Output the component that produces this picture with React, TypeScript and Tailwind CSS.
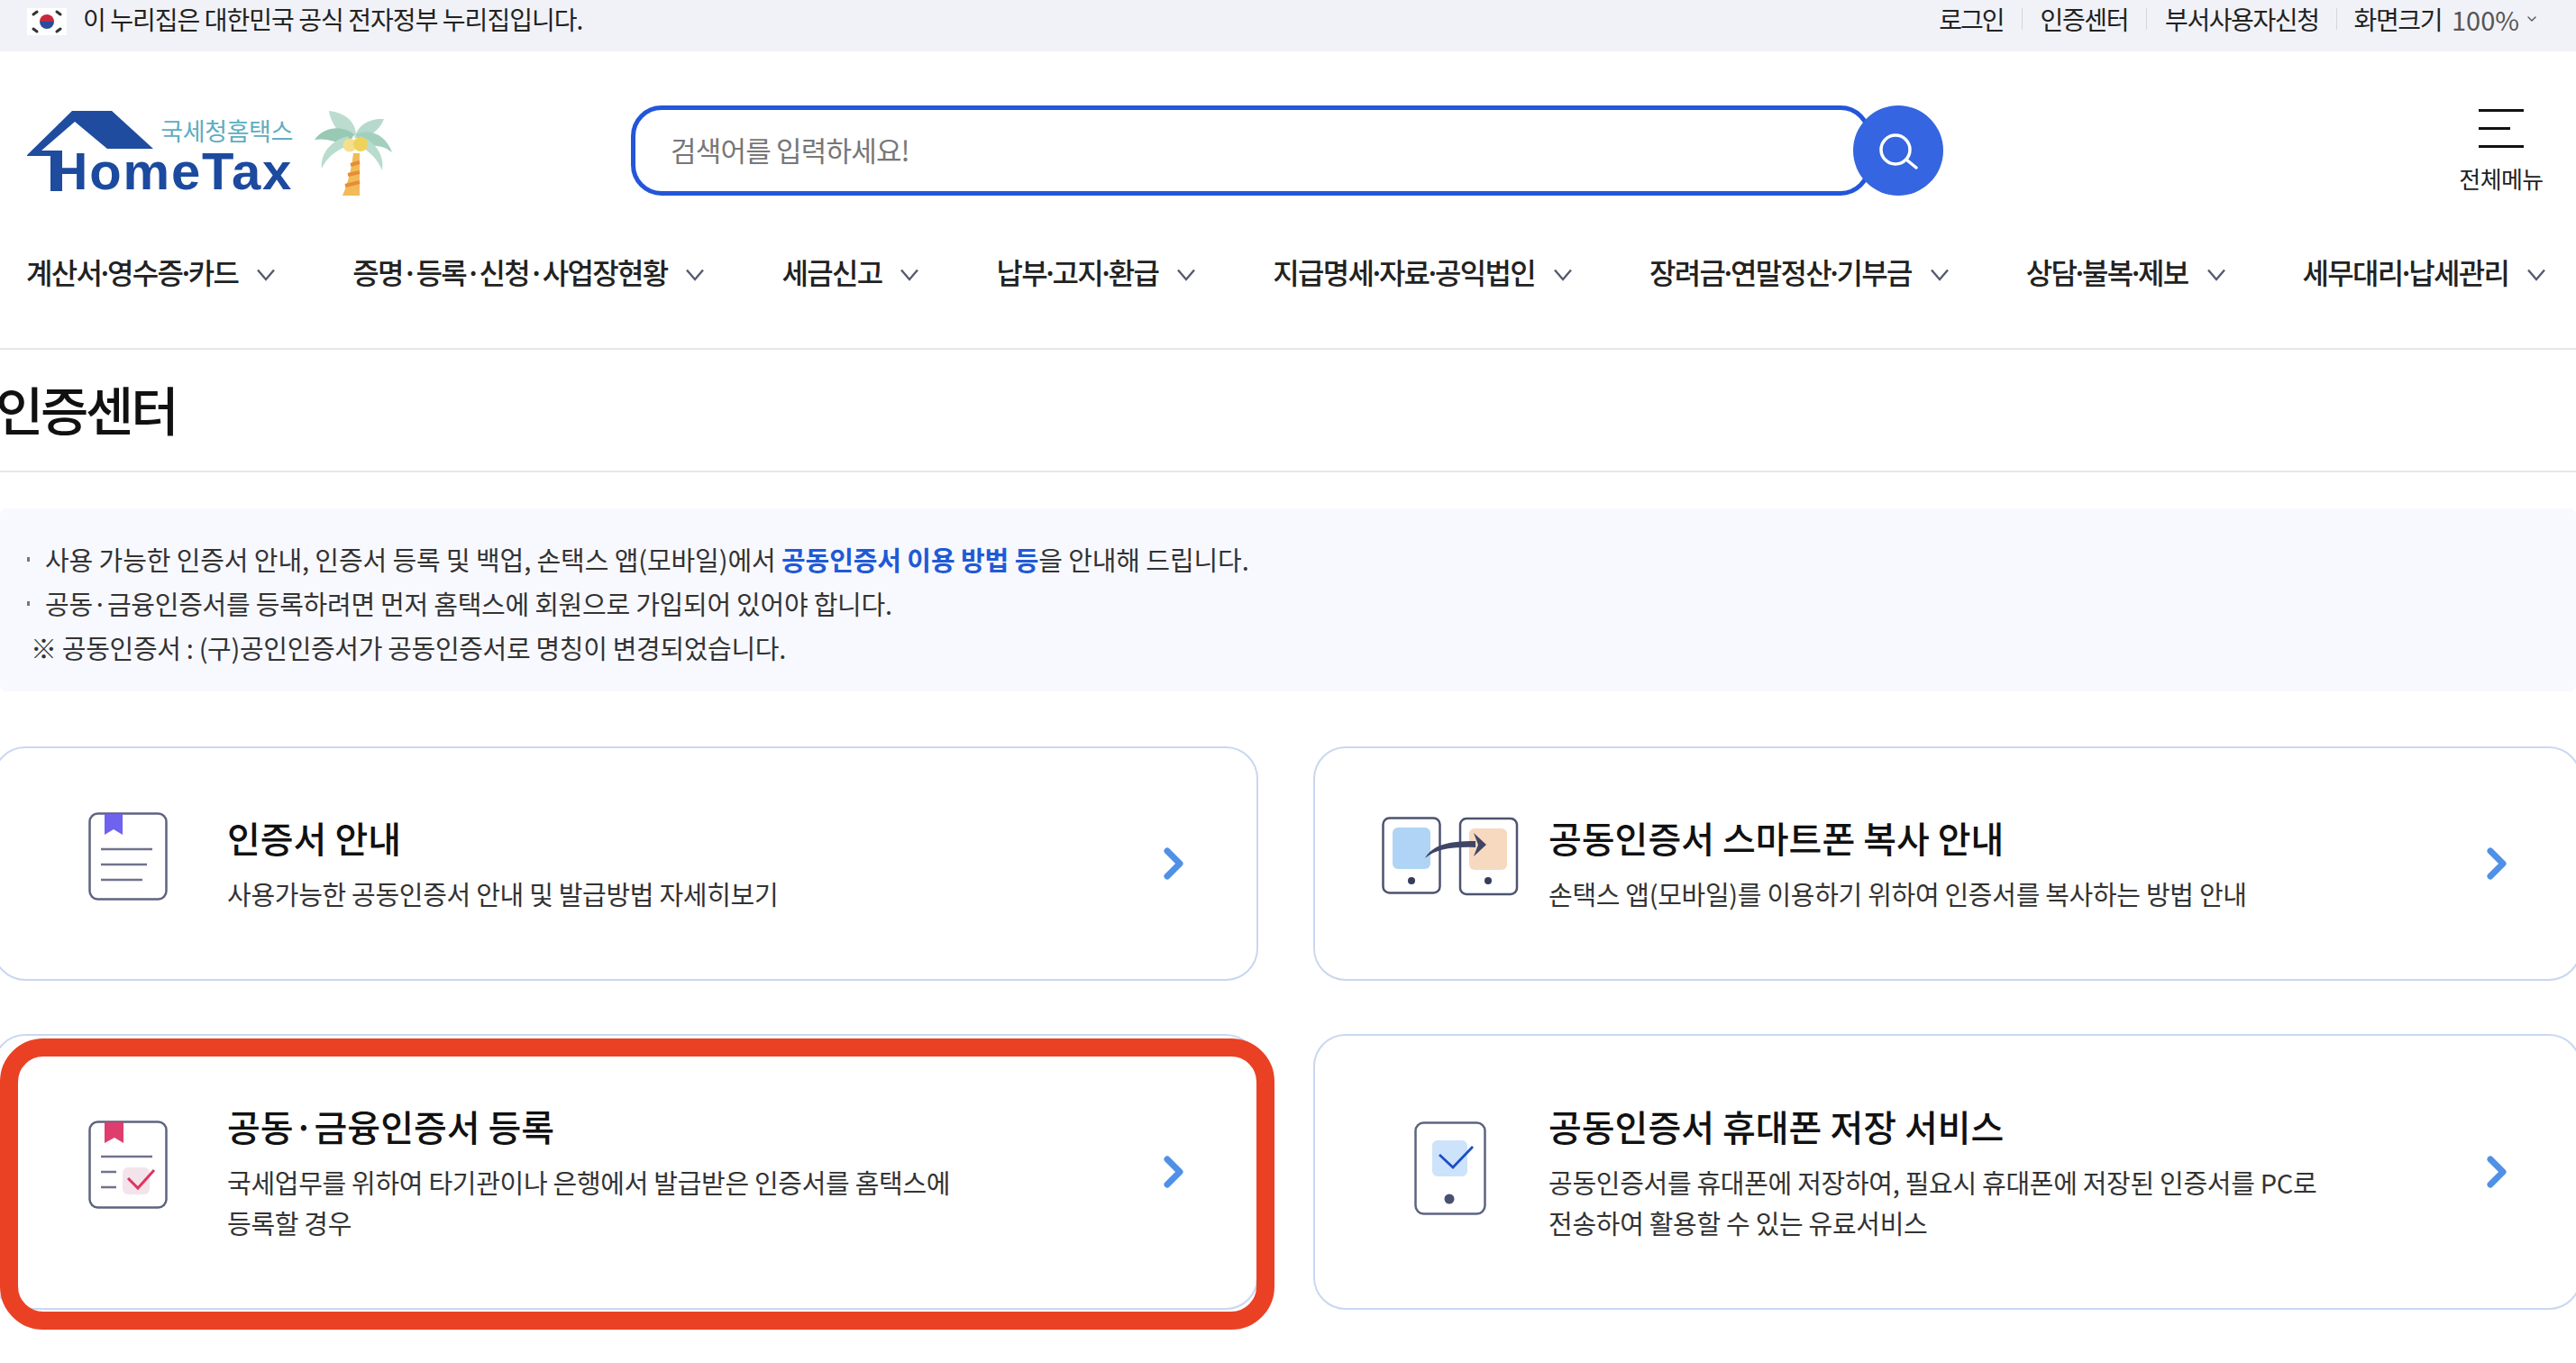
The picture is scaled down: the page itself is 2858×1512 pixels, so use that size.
import { Fragment } from "react";
import type { ReactNode } from "react";
import { ChevronDown } from "lucide-react";

const font = "font-['Noto_Sans_CJK_KR','Noto_Sans',sans-serif]";

const navItems = [
  "계산서·영수증·카드",
  "증명·등록·신청·사업장현황",
  "세금신고",
  "납부·고지·환급",
  "지급명세·자료·공익법인",
  "장려금·연말정산·기부금",
  "상담·불복·제보",
  "세무대리·납세관리",
];

const FlagIcon = () => (
  <svg width="44" height="30" viewBox="0 0 44 30" className="-mt-[9px] shrink-0">
    <rect width="44" height="30" fill="#fff" />
    <path d="M14 15a8 8 0 0 1 16 0z" fill="#c8283c" />
    <path d="M14 15a8 8 0 0 0 16 0z" fill="#2a4c9c" />
    <g stroke="#333" strokeWidth="3" strokeLinecap="round">
      <path d="M7 7l4 -3" />
      <path d="M33 4l4 3" />
      <path d="M7 23l4 3" />
      <path d="M33 26l4 -3" />
    </g>
  </svg>
);

const Logo = () => (
  <div className="relative mt-[6px] flex h-[94px] w-[405px] shrink-0">
    <svg width="150" height="94" viewBox="0 0 150 94" className="absolute left-0 top-0">
      <path d="M0 49L50 0H94L140 42H89L53 12L16 44H39V89H26V50H0z" fill="#1f4c9e" />
    </svg>
    <div className="flex w-[295px] flex-col items-end">
      <span className="mt-[6px] text-[27px] leading-[32px] tracking-[-0.4px] text-[#5eadc0]">국세청홈택스</span>
      <span className="mt-[2px] font-['Liberation_Sans'] text-[58px] leading-[54px] font-bold tracking-[1.8px] text-[#1c4a9e]">
        HomeTax
      </span>
    </div>
    <svg width="86" height="94" viewBox="0 0 86 94" className="absolute left-[319px] top-0">
      <path d="M16 0C34 2 46 12 46 28L28 24C22 18 17 8 16 0z" fill="#bcdccf" />
      <path d="M77 9C72 22 60 31 44 30C48 16 60 8 77 9z" fill="#b5d9cc" />
      <path d="M0 32C10 18 30 15 44 26L36 40C24 33 10 30 0 32z" fill="#98c9b4" />
      <path d="M86 46C80 28 62 18 46 26L54 40C66 37 78 39 86 46z" fill="#a3d0bd" />
      <path d="M8 64C6 48 18 32 38 28L34 40C24 44 13 52 8 64z" fill="#b9dccf" />
      <path d="M75 66C78 50 68 34 50 28L52 40C62 46 70 54 75 66z" fill="#b9dccf" />
      <path d="M43 47H50V94H31C37 80 41 64 43 47z" fill="#f2bb57" />
      <path d="M40 60L50 57M37 71L50 68M34 83L50 79" stroke="#e58d3a" strokeWidth="4" />
      <circle cx="39" cy="38" r="7.5" fill="#f4e08c" />
      <circle cx="51" cy="37" r="8" fill="#efd25a" />
    </svg>
  </div>
);

const DocIcon = () => (
  <svg width="88" height="98" viewBox="0 0 88 98" fill="none">
    <rect x="1.5" y="1.5" width="85" height="95" rx="9" stroke="#5d6480" strokeWidth="2.5" />
    <path d="M18 2h20v23l-10-6-10 6z" fill="#6f62ee" />
    <path d="M14 41h57M14 58h51M14 75h46" stroke="#6f738c" strokeWidth="2.5" />
  </svg>
);

const CheckDocIcon = () => (
  <svg width="88" height="98" viewBox="0 0 88 98" fill="none">
    <rect x="1.5" y="1.5" width="85" height="95" rx="9" stroke="#5d6480" strokeWidth="2.5" />
    <path d="M18 2h21v23l-10-6-11 6z" fill="#de3d6e" />
    <path d="M14 40h57M14 57h17M14 74h17" stroke="#6f738c" strokeWidth="2.5" />
    <rect x="38" y="52" width="30" height="30" rx="6" fill="#f3e4ec" />
    <path d="M44 64l11 11 18-20" stroke="#e0355f" strokeWidth="3" />
  </svg>
);

const CopyIcon = () => (
  <svg width="152" height="88" viewBox="0 0 152 88" fill="none">
    <rect x="1.5" y="1.5" width="63" height="83" rx="7" stroke="#4d5370" strokeWidth="2.5" />
    <rect x="87" y="2" width="63" height="84" rx="7" stroke="#4d5370" strokeWidth="2.5" />
    <rect x="12" y="12" width="42" height="46" rx="6" fill="#b0d4f5" />
    <rect x="97" y="13" width="42" height="46" rx="6" fill="#f6d9bf" />
    <circle cx="33" cy="71" r="4" fill="#363c5c" />
    <circle cx="118" cy="71" r="4" fill="#363c5c" />
    <path d="M48 46C56 32 72 27 104 27V34C78 33 60 36 48 46z" fill="#3f4565" />
    <path d="M102 18L116 31L102 44L107 31z" fill="#3f4565" />
  </svg>
);

const PhoneCheckIcon = () => (
  <svg width="80" height="104" viewBox="0 0 80 104" fill="none">
    <rect x="1.5" y="1.5" width="77" height="101" rx="9" stroke="#5d6480" strokeWidth="2.5" />
    <rect x="20" y="21" width="39" height="40" rx="6" fill="#cde3fb" />
    <path d="M28 37l15 14 22-23" stroke="#1e4fc0" strokeWidth="2.8" />
    <circle cx="39" cy="86" r="5.5" fill="#4a5070" />
  </svg>
);

const ArrowIcon = ({ className }: { className: string }) => (
  <svg width="22" height="36" viewBox="0 0 22 36" fill="none" className={className}>
    <path d="M4 4L18 18L4 32" stroke="#5090e6" strokeWidth="7" strokeLinejoin="round" strokeLinecap="round" />
  </svg>
);

const NavChevron = () => (
  <svg width="20" height="14" viewBox="0 0 20 14" fill="none" className="mt-[9px] shrink-0">
    <path d="M1 1.5L10 12L19 1.5" stroke="#555a70" strokeWidth="2.4" />
  </svg>
);

const NavLabel = ({ label, wide }: { label: string; wide: boolean }) => (
  <span>
    {label.split("·").map((part, i) => (
      <Fragment key={part}>
        {i > 0 && <span className={wide ? "-mx-[1px]" : "-mx-[5px]"}>·</span>}
        {part}
      </Fragment>
    ))}
  </span>
);

type CardProps = {
  icon: ReactNode;
  slot: string;
  iconShift: string;
  title: string;
  desc: ReactNode;
};

const Card = ({ icon, slot, iconShift, title, desc }: CardProps) => (
  <div className="flex items-center rounded-[36px] border-2 border-[#c9d7f0] bg-white">
    <div className={`${slot} ${iconShift} shrink-0`}>{icon}</div>
    <div>
      <div className="text-[40px] leading-[55px] font-medium text-[#111]">{title}</div>
      <div className="mt-[12px] text-[29px] leading-[45px] tracking-[-0.3px] text-[#333]">{desc}</div>
    </div>
    <ArrowIcon className="ml-auto mr-[81px] shrink-0" />
  </div>
);

export default function App() {
  return (
    <div className={`${font} h-[1512px] w-full overflow-hidden bg-white`}>
      {/* 정부 배너 */}
      <div className="flex h-[57px] items-center bg-[#f1f2f7] pl-[30px] pr-[41px]">
        <FlagIcon />
        <span className="ml-[18px] pb-[16px] text-[28px] leading-[36px] tracking-[-0.95px] text-[#222]">
          이 누리집은 대한민국 공식 전자정부 누리집입니다.
        </span>
        <div className="ml-auto flex items-center pb-[16px] text-[28px] leading-[36px] tracking-[-1.4px] text-[#222]">
          <span className="tracking-[-2px]">로그인</span>
          <span className="mx-[20px] h-[24px] w-[1px] bg-[#d4d6dc]" />
          <span>인증센터</span>
          <span className="mx-[20px] h-[24px] w-[1px] bg-[#d4d6dc]" />
          <span>부서사용자신청</span>
          <span className="mx-[19px] h-[24px] w-[1px] bg-[#d4d6dc]" />
          <span>화면크기</span>
          <span className="ml-[11px] text-[29px] tracking-[0px] text-[#555]">100%</span>
          <ChevronDown size={16} strokeWidth={2} className="ml-[6px] text-[#555]" />
        </div>
      </div>

      {/* 로고 · 검색 */}
      <div className="flex items-start pl-[30px] pr-[35px] pt-[60px]">
        <Logo />
        <div className="ml-[265px] flex items-center">
          <div className="flex h-[100px] w-[1376px] items-center rounded-[34px] border-[5px] border-[#2356d8] pb-[2px] pl-[39px] text-[31px] tracking-[-0.8px] text-[#777]">
            검색어를 입력하세요!
          </div>
          <div className="relative -ml-[20px] flex h-[100px] w-[100px] items-center justify-center rounded-full bg-[#3565e0]">
            <svg width="44" height="44" viewBox="0 0 44 44" fill="none" stroke="#fff" strokeWidth="3.5">
              <circle cx="19" cy="21" r="16" />
              <path d="M31 32L42 41" strokeLinecap="round" />
            </svg>
          </div>
        </div>
        <div className="ml-auto flex w-[96px] flex-col items-center pt-[4px]">
          <div className="flex w-[50px] flex-col gap-[17px]">
            <span className="h-[3px] w-[50px] bg-[#111]" />
            <span className="h-[3px] w-[35px] bg-[#111]" />
            <span className="h-[3px] w-[50px] bg-[#111]" />
          </div>
          <span className="mt-[17px] whitespace-nowrap text-[26px] leading-[34px] tracking-[-0.6px] text-[#222]">전체메뉴</span>
        </div>
      </div>

      {/* 메뉴 */}
      <div className="flex h-[171px] items-center gap-[86px] border-b-2 border-[#e6e7eb] pb-[2px] pl-[29px] whitespace-nowrap">
        {navItems.map((item, i) => (
          <div key={item} className="flex items-center gap-[21px] text-[32px] font-medium tracking-[-1.7px] text-[#222]">
            <NavLabel label={item} wide={i === 1} />
            <NavChevron />
          </div>
        ))}
      </div>

      {/* 제목 */}
      <div className="flex h-[136px] items-center border-b-2 border-[#e6e7eb] pb-[4px]">
        <h1 className="-ml-[5px] text-[58px] leading-none font-medium tracking-[-3.3px] text-[#111]">인증센터</h1>
      </div>

      {/* 안내 */}
      <div className="mt-[40px] h-[203px] rounded-[8px] bg-[#f8f9fe] pt-[32px] text-[29px] leading-[49px] tracking-[-0.25px] text-[#333]">
        <div className="flex">
          <span className="ml-[30px] mr-[17px] mt-[22px] h-[5px] w-[3px] bg-[#777]" />
          <span className="tracking-[-0.1px]">
            사용 가능한 인증서 안내, 인증서 등록 및 백업, 손택스 앱(모바일)에서{" "}
            <b className="font-bold text-[#1f5ad6]">공동인증서 이용 방법 등</b>을 안내해 드립니다.
          </span>
        </div>
        <div className="flex">
          <span className="ml-[30px] mr-[17px] mt-[22px] h-[5px] w-[3px] bg-[#777]" />
          <span>공동·금융인증서를 등록하려면 먼저 홈택스에 회원으로 가입되어 있어야 합니다.</span>
        </div>
        <div className="pl-[34px] tracking-[-0.33px]">※ 공동인증서 : (구)공인인증서가 공동인증서로 명칭이 변경되었습니다.</div>
      </div>

      {/* 카드 */}
      <div className="relative mt-[61px]">
        <div className="-ml-[8px] grid w-[2872px] grid-cols-[1404px_1407px] grid-rows-[260px_306px] gap-x-[61px] gap-y-[59px]">
          <Card
            icon={<DocIcon />}
            slot="w-[258px] pl-[104px]"
            iconShift="-mt-[16px]"
            title="인증서 안내"
            desc="사용가능한 공동인증서 안내 및 발급방법 자세히보기"
          />
          <Card
            icon={<CopyIcon />}
            slot="w-[259px] pl-[74px]"
            iconShift="-mt-[16px]"
            title="공동인증서 스마트폰 복사 안내"
            desc="손택스 앱(모바일)를 이용하기 위하여 인증서를 복사하는 방법 안내"
          />
          <Card
            icon={<CheckDocIcon />}
            slot="w-[258px] pl-[104px]"
            iconShift="-mt-[16px]"
            title="공동·금융인증서 등록"
            desc={
              <>
                국세업무를 위하여 타기관이나 은행에서 발급받은 인증서를 홈택스에
                <br />
                등록할 경우
              </>
            }
          />
          <Card
            icon={<PhoneCheckIcon />}
            slot="w-[259px] pl-[110px]"
            iconShift="-mt-[8px]"
            title="공동인증서 휴대폰 저장 서비스"
            desc={
              <>
                공동인증서를 휴대폰에 저장하여, 필요시 휴대폰에 저장된 인증서를 PC로
                <br />
                전송하여 활용할 수 있는 유료서비스
              </>
            }
          />
        </div>
        {/* 강조 표시 */}
        <div className="absolute left-0 top-[324px] h-[323px] w-[1414px] rounded-[48px] border-[20px] border-[#ea4125]" />
      </div>
    </div>
  );
}
